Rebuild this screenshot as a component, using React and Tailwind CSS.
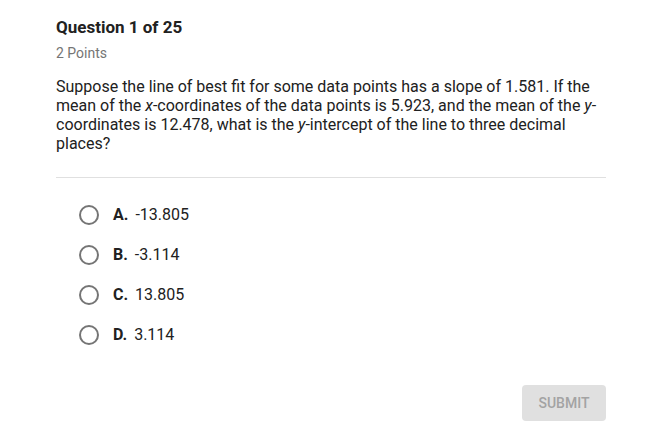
import React from "react"

const options = [
  { letter: "A.", value: "-13.805" },
  { letter: "B.", value: "-3.114" },
  { letter: "C.", value: "13.805" },
  { letter: "D.", value: "3.114" },
]

const App = () => {
  return (
    <div className="w-[664px] h-[443px] bg-white font-['Roboto',sans-serif] text-[#212121]">
      <div className="pl-[56px] pt-[16px] w-[606px]">
        <h1 className="text-[17px] font-bold leading-[22px]">Question 1 of 25</h1>
        <p className="mt-[6px] text-[14px] leading-[18px] text-[#757575]">2 Points</p>

        <p className="mt-[15px] text-[16px] leading-[19px] text-[#212121]">
          Suppose the line of best fit for some data points has a slope of 1.581. If the mean of the{" "}
          <i>x</i>-coordinates of the data points is 5.923, and the mean of the <i>y</i>-coordinates is
          12.478, what is the <i>y</i>-intercept of the line to three decimal places?
        </p>

        <div className="mt-[24px] border-t border-[#e0e0e0]" />

        <div className="mt-[27px] flex flex-col gap-[20px] pl-[23px]">
          {options.map((opt) => (
            <label key={opt.letter} className="flex items-center h-[20px] cursor-pointer">
              <span className="w-[20px] h-[20px] rounded-full border-2 border-[#757575]" />
              <span className="ml-[14px] text-[16px] font-bold">{opt.letter}</span>
              <span className="ml-[7px] text-[16px]">{opt.value}</span>
            </label>
          ))}
        </div>

        <div className="mt-[40px] flex justify-end">
          <button className="w-[84px] h-[36px] rounded-[4px] bg-[#e0e0e0] text-[14px] font-medium text-[#a3a3a3]">
            SUBMIT
          </button>
        </div>
      </div>
    </div>
  )
}

export default App
